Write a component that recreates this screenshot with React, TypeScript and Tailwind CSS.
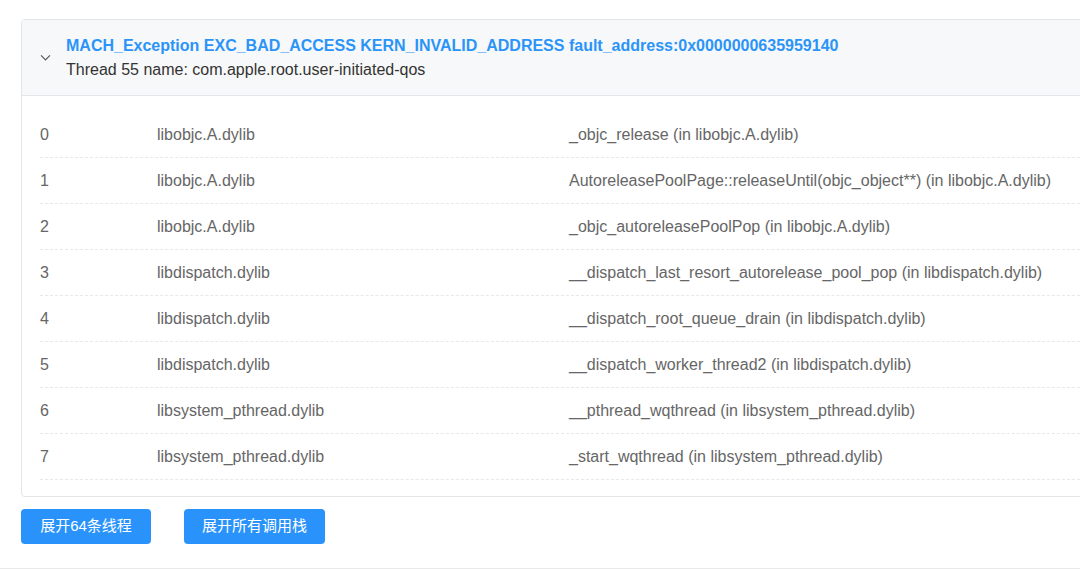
import React from "react";

const frames = [
  ["0", "libobjc.A.dylib", "_objc_release (in libobjc.A.dylib)"],
  ["1", "libobjc.A.dylib", "AutoreleasePoolPage::releaseUntil(objc_object**) (in libobjc.A.dylib)"],
  ["2", "libobjc.A.dylib", "_objc_autoreleasePoolPop (in libobjc.A.dylib)"],
  ["3", "libdispatch.dylib", "__dispatch_last_resort_autorelease_pool_pop (in libdispatch.dylib)"],
  ["4", "libdispatch.dylib", "__dispatch_root_queue_drain (in libdispatch.dylib)"],
  ["5", "libdispatch.dylib", "__dispatch_worker_thread2 (in libdispatch.dylib)"],
  ["6", "libsystem_pthread.dylib", "__pthread_wqthread (in libsystem_pthread.dylib)"],
  ["7", "libsystem_pthread.dylib", "_start_wqthread (in libsystem_pthread.dylib)"],
];

export default function App() {
  return (
    <div className="relative w-[1080px] h-[571px] overflow-hidden bg-white font-['Liberation_Sans','Noto_Sans_CJK_SC',sans-serif]">
      <div className="pt-[19px] pl-[21px]">
        {/* 线程卡片 */}
        <div className="w-[1100px] border border-[#e3e5e8] rounded-[4px] overflow-hidden">
          <div className="flex items-center bg-[#f7f8f9] border-b border-[#e3e5e8] h-[76px] pl-[17px]">
            <svg className="w-[13px] h-[13px] text-[#555] mr-[14px]" viewBox="0 0 16 16" fill="none" stroke="currentColor" strokeWidth="1.4">
              <path d="M2.5 5.5 8 11l5.5-5.5" />
            </svg>
            <div className="leading-[24px]">
              <div className="text-[16px] font-bold text-[#2b94f8]">
                MACH_Exception EXC_BAD_ACCESS KERN_INVALID_ADDRESS fault_address:0x0000000635959140
              </div>
              <div className="text-[16px] text-[#333]">Thread 55 name: com.apple.root.user-initiated-qos</div>
            </div>
          </div>

          <div className="pt-[16px] pb-[16px] pl-[18px]">
            {frames.map(([idx, lib, sym]) => (
              <div
                key={idx}
                className="flex items-center h-[46px] border-b border-dashed border-[#e6e8eb] text-[16px] text-[#666]"
              >
                <div className="w-[117px]">{idx}</div>
                <div className="w-[412px]">{lib}</div>
                <div className="whitespace-nowrap">{sym}</div>
              </div>
            ))}
          </div>
        </div>

        {/* 操作按钮 */}
        <div className="flex gap-[33px] mt-[12px]">
          <button className="h-[35px] w-[130px] rounded-[4px] bg-[#2a93fb] text-white text-[15px]">展开64条线程</button>
          <button className="h-[35px] w-[141px] rounded-[4px] bg-[#2a93fb] text-white text-[15px]">展开所有调用栈</button>
        </div>
      </div>

      <div className="absolute left-0 right-0 top-[568px] border-t border-[#e6e8eb]" />
    </div>
  );
}
